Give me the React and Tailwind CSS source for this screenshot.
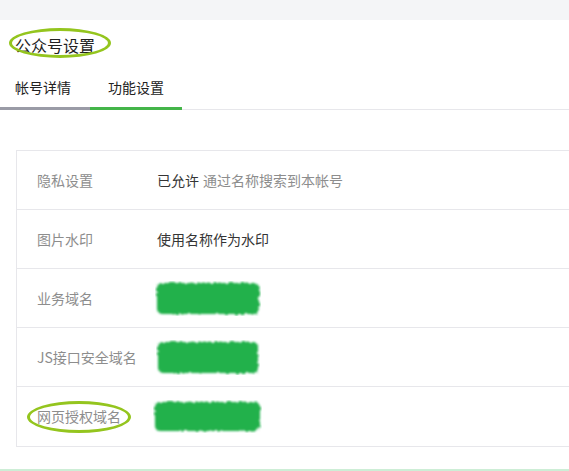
import React from 'react';

const font = { fontFamily: '"Noto Sans CJK SC", "Noto Sans", sans-serif' };

// Scribbled-out value (the screenshot hides the domain with a green marker)
const Scribble = ({ w = 104, h = 33 }) => (
  <svg width={w} height={h} viewBox={`0 0 ${w} ${h}`} className="block">
    <defs>
      <filter id="rough" x="-10%" y="-20%" width="120%" height="140%">
        <feTurbulence type="fractalNoise" baseFrequency="0.3" numOctaves="2" seed="3" />
        <feDisplacementMap in="SourceGraphic" scale="4" />
        <feGaussianBlur stdDeviation="0.9" />
      </filter>
    </defs>
    <rect x="2" y="2" width={w - 4} height={h - 4} rx="5" fill="#22b14c" filter="url(#rough)" />
  </svg>
);

const Row = ({ label, children, circled }) => (
  <div className="relative flex items-center h-[59px] border-b border-[#e7e7eb] last:border-b-0">
    <div className="w-[140px] pl-[20px] text-[14px] text-[#8d8d8d]">{label}</div>
    <div className="text-[14px] text-[#353535]">{children}</div>
    {circled && (
      <div className="absolute left-[10px] top-[14px] w-[104px] h-[32px] rounded-[50%] border-[3px] border-[#94c51e]" />
    )}
  </div>
);

export default function App() {
  return (
    <div className="relative w-[569px] h-[471px] overflow-hidden bg-white" style={font}>
      <div className="h-5 bg-[#f4f5f7]" />

      <div className="relative h-[50px] flex items-center pl-[15px] text-[16px] text-[#222]">
        公众号设置
        <div className="absolute left-[9px] top-[8px] w-[102px] h-[30px] rounded-[50%] border-[3px] border-[#94c51e]" />
      </div>

      <div className="flex items-end h-10 border-b border-[#e7e7eb] text-[14px] text-[#222]">
        <div className="w-[90px] pl-[15px] pt-[7px] pb-[10px] leading-[20px] border-b-[3px] border-[#9a9ba6] -mb-px">帐号详情</div>
        <div className="w-[92px] pl-[18px] pt-[7px] pb-[10px] leading-[20px] border-b-[3px] border-[#44b549] -mb-px">功能设置</div>
      </div>

      <div className="mt-10 ml-4 w-[640px] border border-[#e7e7eb]">
        <Row label="隐私设置">
          已允许<span className="ml-1 text-[#8d8d8d]">通过名称搜索到本帐号</span>
        </Row>
        <Row label="图片水印">使用名称作为水印</Row>
        <Row label="业务域名">
          <div className="-ml-[2px]"><Scribble w={106} h={35} /></div>
        </Row>
        <Row label="JS接口安全域名">
          <div className="-ml-[1px]"><Scribble w={104} h={35} /></div>
        </Row>
        <Row label="网页授权域名" circled>
          <div className="-ml-[4px]"><Scribble w={109} h={33} /></div>
        </Row>
      </div>

      <div className="mt-[22px] h-2 bg-[#cdeed6]" />
    </div>
  );
}
